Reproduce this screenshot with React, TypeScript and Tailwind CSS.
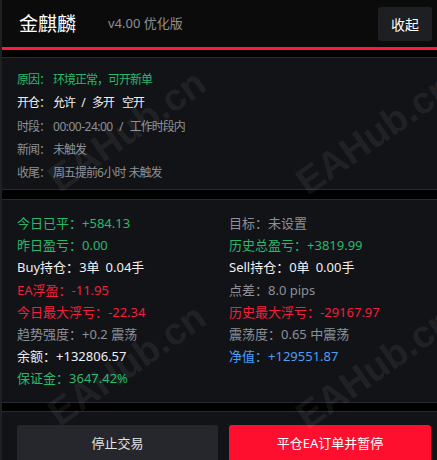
import React from 'react';

type Tone = 'green' | 'red' | 'white' | 'gray' | 'blue';

const toneClass: Record<Tone, string> = {
    green: 'text-[#29b86c]',
    red: 'text-[#f41e3c]',
    white: 'text-[#f0f0f0]',
    gray: 'text-[#8d9095]',
    blue: 'text-[#4a9ff5]',
};

interface Stat {
    label: string;
    value: React.ReactNode;
    tone: Tone;
}

// latin bits in the status block use looser spacing than the CJK text
const Num: React.FC<{ children: React.ReactNode }> = ({ children }) => (
    <span className="tracking-[-0.5px]">{children}</span>
);

const Sep = () => <span className="inline-block w-[17px] text-center tracking-normal">/</span>;

const statusRows: Stat[] = [
    { label: '原因：', value: '环境正常，可开新单', tone: 'green' },
    { label: '开仓：', value: <>允许<Sep />多开<span className="ml-[8px]">空开</span></>, tone: 'white' },
    { label: '时段：', value: <><Num>00:00-24:00</Num><Sep />工作时段内</>, tone: 'gray' },
    { label: '新闻：', value: '未触发', tone: 'gray' },
    { label: '收尾：', value: <>周五提前<Num>6</Num>小时<span className="ml-[3px]">未触发</span></>, tone: 'gray' },
];

const leftStats: Stat[] = [
    { label: '今日已平：', value: '+584.13', tone: 'green' },
    { label: '昨日盈亏：', value: '0.00', tone: 'green' },
    { label: 'Buy持仓：', value: <>3单<span className="ml-[6px]">0.04手</span></>, tone: 'white' },
    { label: 'EA浮盈：', value: '-11.95', tone: 'red' },
    { label: '今日最大浮亏：', value: '-22.34', tone: 'red' },
    { label: '趋势强度：', value: '+0.2 震荡', tone: 'gray' },
    { label: '余额：', value: '+132806.57', tone: 'white' },
    { label: '保证金：', value: '3647.42%', tone: 'green' },
];

const rightStats: Stat[] = [
    { label: '目标：', value: '未设置', tone: 'gray' },
    { label: '历史总盈亏：', value: '+3819.99', tone: 'green' },
    { label: 'Sell持仓：', value: <>0单<span className="ml-[6px]">0.00手</span></>, tone: 'white' },
    { label: '点差：', value: '8.0 pips', tone: 'gray' },
    { label: '历史最大浮亏：', value: '-29167.97', tone: 'red' },
    { label: '震荡度：', value: '0.65 中震荡', tone: 'gray' },
    { label: '净值：', value: '+129551.87', tone: 'blue' },
];

// watermark tiles across the panel
const marks = [
    { left: 125, top: 131 },
    { left: 373, top: 134 },
    { left: 125, top: 365 },
    { left: 373, top: 368 },
];

const StatRow: React.FC<{ stat: Stat; className: string; spaced?: boolean }> = ({ stat, className, spaced }) => (
    <div className={`whitespace-nowrap ${className} ${toneClass[stat.tone]}`}>
        <span>{stat.label}</span>
        <span className={spaced ? 'ml-[3px]' : ''}>{stat.value}</span>
    </div>
);

export default function App() {
    return (
        <div
            className="relative w-[437px] min-h-[460px] overflow-hidden bg-black border-l-2 border-[#1f2024]"
            style={{ fontFamily: '"Noto Sans", "Noto Sans CJK SC", sans-serif' }}
        >
            {/* header */}
            <div className="h-[50px] bg-[#0b0b0c] border-b-[3px] border-[#ff1a3a] flex items-start justify-between pl-[17px] pr-[5px]">
                <div className="flex items-center h-[48px]">
                    <span className="text-[19px] leading-none text-white">金麒麟</span>
                    <span className="ml-[32px] text-[13px] text-[#8b8f96]">v4.00 优化版</span>
                </div>
                <button className="mt-[7px] w-[54px] h-[34px] rounded-[3px] bg-[#1e1f23] text-[14px] text-white">
                    收起
                </button>
            </div>

            {/* trading status */}
            <div className="mt-[7px] bg-[#121317] border-y border-[#2a2b30] pl-[15px] pt-[10px] pb-[5px] text-[12px] tracking-[-1px]">
                {statusRows.map((s) => (
                    <StatRow key={s.label} stat={s} spaced className="leading-[23.25px]" />
                ))}
            </div>

            {/* account stats */}
            <div className="mt-[9px] bg-[#121317] border-y border-[#2a2b30] pl-[15px] pt-[12px] pb-[13px] text-[13px] grid grid-cols-[212px_1fr]">
                <div>
                    {leftStats.map((s) => (
                        <StatRow key={s.label} stat={s} className="leading-[22.1px]" />
                    ))}
                </div>
                <div>
                    {rightStats.map((s) => (
                        <StatRow key={s.label} stat={s} className="leading-[22.1px]" />
                    ))}
                </div>
            </div>

            {/* actions */}
            <div className="mt-[8px] bg-[#121317] border-t border-[#2a2b30] pl-[15px] pt-[13px] pb-[12px] flex gap-[11px]">
                <button className="w-[201px] h-[37px] rounded-[3px] bg-[#26272c] text-[13px] text-[#e4e4e4]">
                    停止交易
                </button>
                <button className="w-[202px] h-[37px] rounded-[3px] bg-[#ff0f2e] text-[13px] text-white">
                    平仓EA订单并暂停
                </button>
            </div>

            <div className="pointer-events-none absolute inset-0">
                {marks.map((m, i) => (
                    <span
                        key={i}
                        className="absolute -translate-x-1/2 -translate-y-1/2 -rotate-[35deg] text-[38px] font-bold text-white/[0.08] whitespace-nowrap"
                        style={{ left: m.left, top: m.top, fontFamily: '"Liberation Sans", sans-serif' }}
                    >
                        EAHub.cn
                    </span>
                ))}
            </div>
        </div>
    );
}
